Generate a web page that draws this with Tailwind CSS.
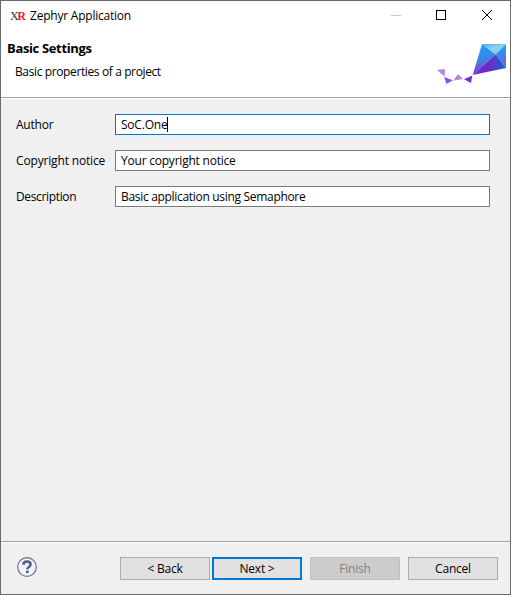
<!DOCTYPE html>
<html lang="en">
<head>
<meta charset="utf-8">
<title>Zephyr Application</title>
<script src="https://cdn.jsdelivr.net/npm/@tailwindcss/browser@4"></script>
</head>
<body class="bg-[#f0f0f0]">
<div class="w-[511px] h-[595px] border border-[#6b6b6b] bg-[#f0f0f0] flex flex-col overflow-hidden font-['Open_Sans','Noto_Sans',sans-serif] text-[12px] leading-4 text-black whitespace-nowrap">
  <header class="bg-white h-[96px] shrink-0">
    <div class="flex h-[30px] items-center pl-[9px]">
      <span class="w-[20px] font-['Liberation_Serif',serif] text-[12px] tracking-[-1.4px] text-[#333]">X<span class="text-[#ee1c25] font-bold">R</span></span>
      <span class="tracking-[-0.22px]">Zephyr Application</span>
      <svg class="ml-auto" width="120" height="30" viewBox="390 1 120 30" fill="none" shape-rendering="crispEdges">
        <path d="M391 15.5h10" stroke="#c6c6c6"/>
        <rect x="436.5" y="10.5" width="9" height="9" stroke="#000"/>
        <path d="M482 10l10 10M492 10l-10 10" stroke="#000" shape-rendering="auto"/>
      </svg>
    </div>
    <div class="flex justify-between">
      <div class="pl-[6px] pt-[9px]">
        <h1 class="font-bold text-[13px] leading-4 tracking-[-0.35px]">Basic Settings</h1>
        <p class="pl-[8px] pt-[8px] tracking-[-0.38px]">Basic properties of a project</p>
      </div>
      <svg class="mr-[4px] mt-[9px]" width="71" height="48" viewBox="435 40 71 48">
        <defs>
          <linearGradient id="top" x1="0" y1="0" x2="0.5" y2="1"><stop stop-color="#42b0f0"/><stop offset=".5" stop-color="#8fd3ee"/><stop offset="1" stop-color="#7cc8ee"/></linearGradient>
          <linearGradient id="left" x1="0" y1="0" x2="0" y2="1"><stop stop-color="#209dfa"/><stop offset=".5" stop-color="#4281e5"/><stop offset="1" stop-color="#8037d0"/></linearGradient>
          <linearGradient id="right" x1="0" y1="0" x2="0" y2="1"><stop stop-color="#17a3f5"/><stop offset="1" stop-color="#6e61d9"/></linearGradient>
          <linearGradient id="base" x1="0" y1="0" x2="1" y2="0"><stop stop-color="#7929d2"/><stop offset=".5" stop-color="#6a2bc9"/><stop offset="1" stop-color="#1765ca"/></linearGradient>
        </defs>
        <path d="M482 44h24L495.5 54.5z" fill="url(#top)"/>
        <path d="M482 44l13.500 10.500L472.700 75z" fill="url(#left)"/>
        <path d="M506 44v24L495.500 54.500z" fill="url(#right)"/>
        <path d="M495.500 54.500L506 68L472.700 75z" fill="url(#base)"/>
        <path d="M437 70l8-1-.5 7.500z" fill="#b383e6"/>
        <path d="M444 77l9 3.300-6.500 3.700z" fill="#9450dc"/>
        <path d="M453.500 80.500l4.500-6.500 5 5z" fill="#b383e6"/>
        <path d="M464 79.300l8.300-3.800-1.300 7.500z" fill="#7e2bd2"/>
      </svg>
    </div>
  </header>
  <div class="h-[2px] shrink-0 bg-white border-t border-[#a0a0a0]"></div>
  <main class="flex-1 pt-[15px] pl-[15px] pr-[20px] flex flex-col gap-[15px]">
    <div class="flex h-[21px] items-center">
      <label class="w-[99px] tracking-[-0.22px]">Author</label>
      <div class="flex-1 h-[21px] bg-white border border-[#0078d7] pl-[5px] flex items-center"><span class="tracking-[-0.22px]">SoC.One</span><i class="w-px h-[15px] bg-black"></i></div>
    </div>
    <div class="flex h-[21px] items-center">
      <label class="w-[99px] tracking-[-0.16px]">Copyright notice</label>
      <div class="flex-1 h-[21px] bg-white border border-[#7a7a7a] pl-[5px] flex items-center tracking-[-0.22px]">Your copyright notice</div>
    </div>
    <div class="flex h-[21px] items-center">
      <label class="w-[99px] tracking-[-0.35px]">Description</label>
      <div class="flex-1 h-[21px] bg-white border border-[#7a7a7a] pl-[5px] flex items-center tracking-[-0.31px]">Basic application using Semaphore</div>
    </div>
  </main>
  <div class="h-[2px] shrink-0 bg-white border-t border-[#a0a0a0]"></div>
  <footer class="h-[51px] shrink-0 flex items-start pt-[14px] pl-[15px] tracking-[-0.22px]">
    <svg width="22" height="22" viewBox="0 0 22 22" fill="none">
      <circle cx="11" cy="10" r="9.300" fill="#f3f4f7" stroke="#647291" stroke-width="1.200"/>
      <path d="M7.500 7.800c0-2.200 1.500-3.200 3.500-3.200s3.600 1 3.600 2.900c0 2.400-3.400 2.500-3.400 4.800" stroke="#4f6087" stroke-width="2.500"/>
      <rect x="10" y="13.600" width="2.600" height="2.500" fill="#4f6087"/>
    </svg>
    <button class="ml-[82px] w-[90px] h-[23px] bg-[#e1e1e1] border border-[#adadad] leading-[21px]">&lt; Back</button>
    <button class="ml-[2px] w-[90px] h-[23px] bg-[#e1e1e1] border-2 border-[#0078d7] leading-[19px]">Next &gt;</button>
    <button class="ml-[8px] w-[90px] h-[23px] bg-[#cccccc] border border-[#bfbfbf] text-[#838383] leading-[21px]">Finish</button>
    <button class="ml-[8px] w-[90px] h-[23px] bg-[#e1e1e1] border border-[#adadad] leading-[21px]">Cancel</button>
  </footer>
</div>
</body>
</html>
